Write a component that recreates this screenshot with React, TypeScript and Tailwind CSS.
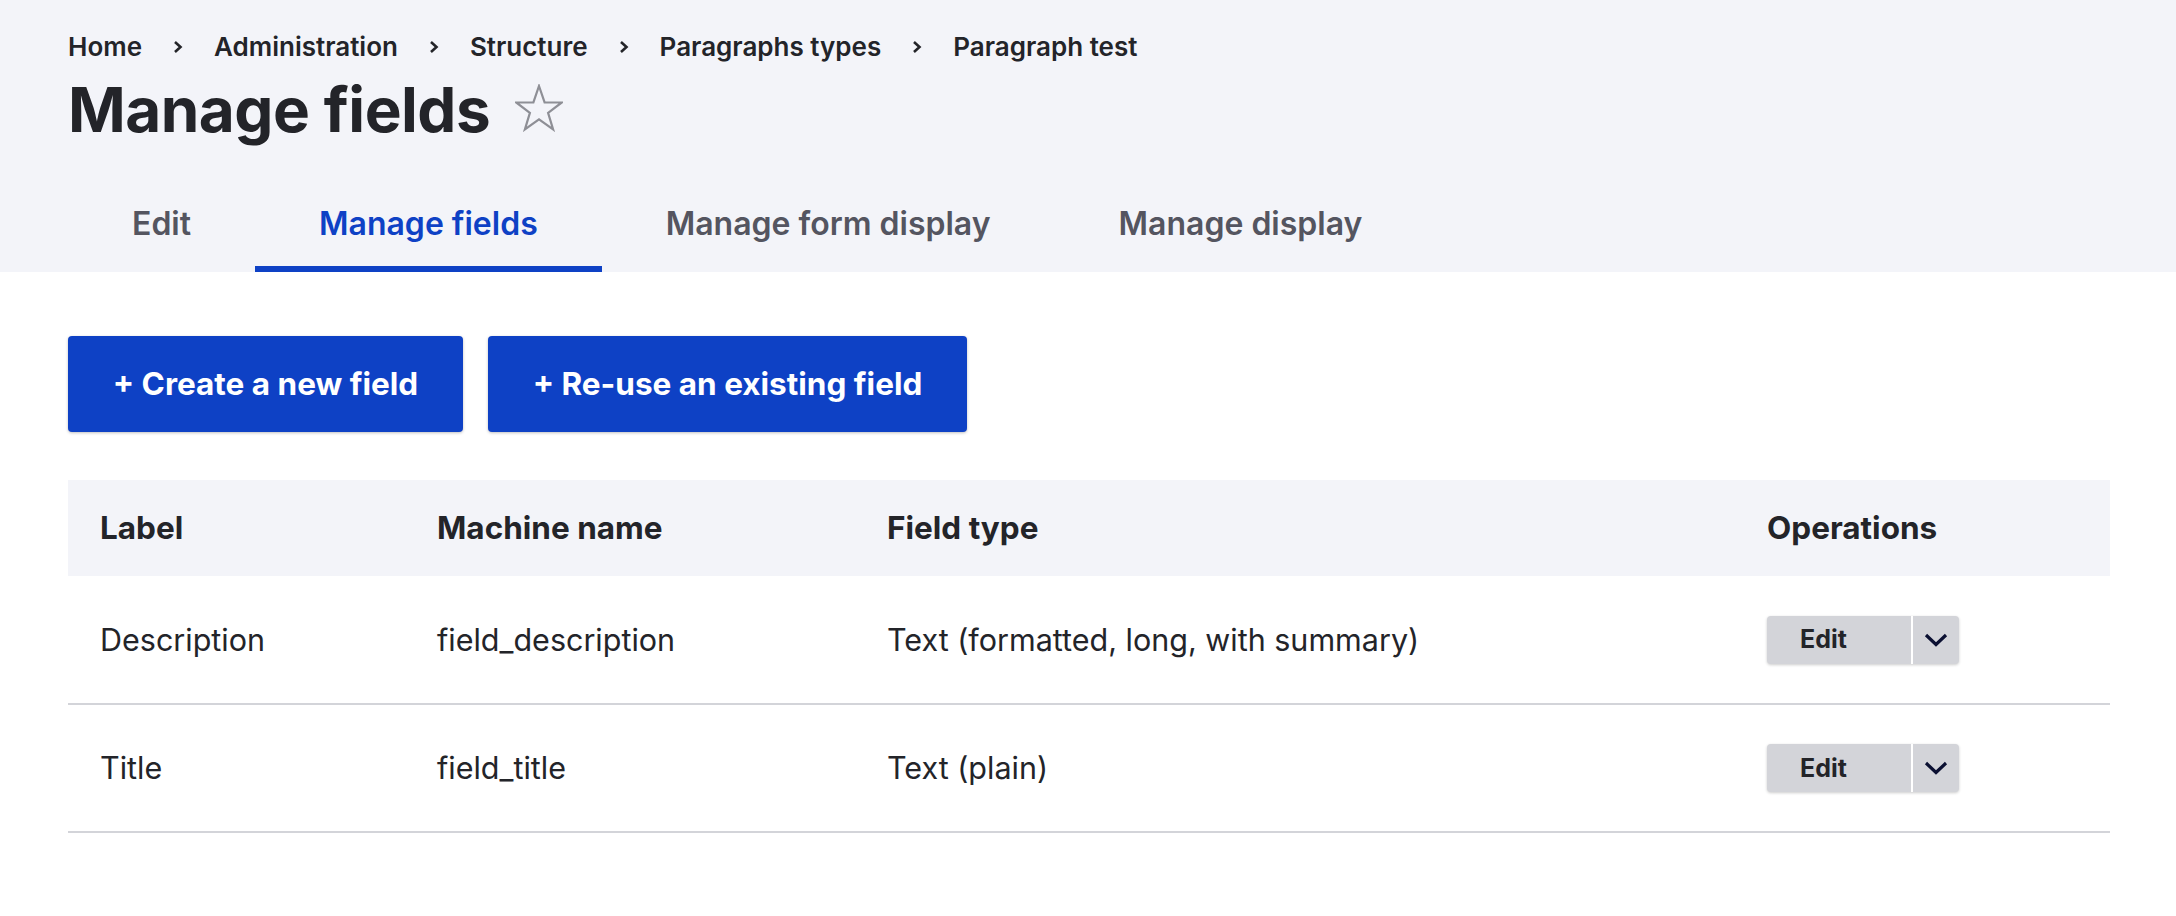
import React from 'react'

const crumbs = ['Home', 'Administration', 'Structure', 'Paragraphs types', 'Paragraph test']

const tabs = [
  { label: 'Edit', active: false },
  { label: 'Manage fields', active: true },
  { label: 'Manage form display', active: false },
  { label: 'Manage display', active: false },
]

const fields = [
  { label: 'Description', machine: 'field_description', type: 'Text (formatted, long, with summary)' },
  { label: 'Title', machine: 'field_title', type: 'Text (plain)' },
]

function CrumbArrow() {
  return (
    <svg width="10" height="12" viewBox="0 0 10 12" className="mx-[31px] shrink-0">
      <polyline points="2,1 7.5,6 2,11" fill="none" stroke="#232429" strokeWidth="2.6" />
    </svg>
  )
}

function StarIcon() {
  return (
    <svg width="48" height="48" viewBox="0 0 48 48" className="ml-[25px] mt-[-4px]">
      <polygon
        points="24,2 29.6,18.3 46.8,18.5 33.1,28.9 38.1,45.4 24,35.4 9.9,45.4 14.9,28.9 1.2,18.5 18.4,18.3"
        fill="none"
        stroke="#8e8f96"
        strokeWidth="2.2"
        strokeLinejoin="miter"
      />
    </svg>
  )
}

function DropButton() {
  return (
    <div className="flex h-[48px] w-[192px] overflow-hidden rounded-[4px] bg-[#d3d4d9] shadow-[0_1px_3px_rgba(0,0,0,0.2)]">
      <button className="flex w-[144px] items-center pl-[33px] text-[25px] font-bold leading-none text-[#232429]">
        Edit
      </button>
      <div className="w-[2px] bg-white" />
      <button className="flex flex-1 items-center justify-center">
        <svg width="24" height="14" viewBox="0 0 24 14">
          <polyline points="2,2 12,11.5 22,2" fill="none" stroke="#0b1032" strokeWidth="3.2" />
        </svg>
      </button>
    </div>
  )
}

export default function App() {
  return (
    <div className="min-h-screen bg-white font-['Inter','Liberation_Sans',sans-serif] text-[#232429]">
      <div className="bg-[#f3f4f9] px-[68px] pt-[31px]">
        <nav className="flex h-[32px] items-center text-[26px] font-semibold leading-[32px]">
          {crumbs.map((crumb, i) => (
            <React.Fragment key={crumb}>
              {i > 0 && <CrumbArrow />}
              <a href="#" className="whitespace-nowrap">{crumb}</a>
            </React.Fragment>
          ))}
        </nav>
        <div className="mt-[8px] flex items-center">
          <h1 className="text-[62px] font-bold leading-[77px] tracking-[-0.5px]">Manage fields</h1>
          <StarIcon />
        </div>
        <div className="mt-[28px] flex">
          {tabs.map((tab) => (
            <a
              key={tab.label}
              href="#"
              className={`flex h-[96px] items-center whitespace-nowrap border-b-[6px] px-[64px] pt-[6px] text-[32px] font-semibold ${
                tab.active ? 'border-[#0e41c5] text-[#0e41c5]' : 'border-transparent text-[#545560]'
              }`}
            >
              {tab.label}
            </a>
          ))}
        </div>
      </div>

      <div className="px-[68px] pt-[64px]">
        <div className="flex gap-[25px]">
          <button className="flex h-[96px] w-[395px] items-center justify-center rounded-[4px] bg-[#0e41c5] text-[31.5px] font-bold text-white shadow-[0_1px_3px_rgba(0,0,0,0.25)]">
            + Create a new field
          </button>
          <button className="flex h-[96px] w-[479px] items-center justify-center rounded-[4px] bg-[#0e41c5] text-[31.5px] font-bold text-white shadow-[0_1px_3px_rgba(0,0,0,0.25)]">
            + Re-use an existing field
          </button>
        </div>

        <table className="mt-[48px] w-[2042px] table-fixed border-collapse text-left text-[30.5px]">
          <colgroup>
            <col className="w-[337px]" />
            <col className="w-[450px]" />
            <col className="w-[880px]" />
            <col />
          </colgroup>
          <thead>
            <tr className="h-[96px] bg-[#f3f4f9] text-[31.5px]">
              <th className="px-[32px] font-bold">Label</th>
              <th className="px-[32px] font-bold">Machine name</th>
              <th className="px-[32px] font-bold">Field type</th>
              <th className="px-[32px] font-bold">Operations</th>
            </tr>
          </thead>
          <tbody>
            {fields.map((field) => (
              <tr key={field.machine} className="h-[128px] border-b-2 border-[#d3d4d9]">
                <td className="px-[32px]">{field.label}</td>
                <td className="px-[32px]">{field.machine}</td>
                <td className="px-[32px]">{field.type}</td>
                <td className="px-[32px]">
                  <DropButton />
                </td>
              </tr>
            ))}
          </tbody>
        </table>
      </div>
    </div>
  )
}
